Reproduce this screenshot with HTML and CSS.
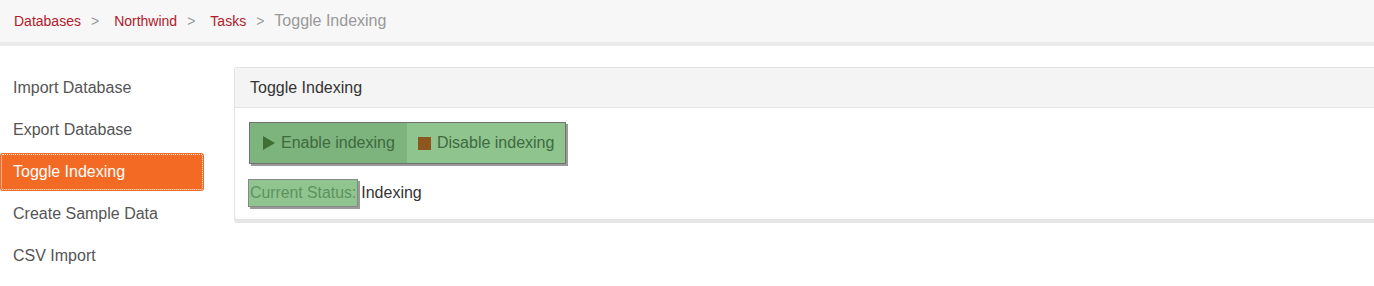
FILE: index.html
```html
<!DOCTYPE html>
<html>
<head>
<meta charset="utf-8">
<link rel="stylesheet" href="styles.css">
</head>
<body>
<nav class="crumbs">
  <a class="crumb first" href="#">Databases</a><span class="sep">&gt;</span>
  <a class="crumb" href="#">Northwind</a><span class="sep">&gt;</span>
  <a class="crumb" href="#">Tasks</a><span class="sep">&gt;</span>
  <span class="current">Toggle Indexing</span>
</nav>
<div class="main">
  <ul class="side">
    <li class="item">Import Database</li>
    <li class="item">Export Database</li>
    <li class="item active">Toggle Indexing</li>
    <li class="item">Create Sample Data</li>
    <li class="item">CSV Import</li>
  </ul>
  <section class="panel">
    <div class="panel-head">Toggle Indexing</div>
    <div class="panel-body">
      <div class="btn-group">
        <button class="btn on"><svg class="ico" width="12" height="14" viewBox="0 0 12 14"><polygon points="0,0 12,7 0,14" fill="#3f6f34"/></svg>Enable indexing</button>
        <button class="btn"><span class="stop"></span>Disable indexing</button>
      </div>
      <div class="status"><span class="label">Current Status:</span><span class="val">Indexing</span></div>
    </div>
  </section>
</div>
</body>
</html>
```
FILE: styles.css
```css
html, body {
  margin: 0;
  padding: 0;
  background: #fff;
  font-family: "Liberation Sans", Arial, sans-serif;
}
.crumbs {
  height: 42px;
  background: #f7f7f7;
  border-bottom: 4px solid #ebebeb;
  display: flex;
  align-items: center;
  padding-left: 14px;
  font-size: 14px;
}
.crumb {
  color: #b3192a;
  text-decoration: none;
  margin-left: 5px;
}
.crumb.first { margin-left: 0; }
.sep {
  color: #999;
  margin: 0 10px;
}
.current {
  color: #999;
  font-size: 16px;
}
.main {
  display: flex;
  gap: 30px;
  padding-top: 21px;
}
.side {
  list-style: none;
  margin: 2px 0 0 0;
  padding: 0;
  width: 204px;
  flex: none;
  display: flex;
  flex-direction: column;
  gap: 4px;
}
.item {
  font-size: 16px;
  line-height: 20px;
  padding: 9px 13px;
  color: #555;
}
.item.active {
  background: #f36a25;
  color: #fff;
  border-radius: 3px;
  outline: 1px dotted #fff;
  outline-offset: -2px;
}
.panel {
  flex: 1;
  border: 1px solid #e3e3e3;
  border-right: none;
  border-radius: 3px 0 0 3px;
  box-shadow: 0 3px 0 #e6e6e6;
  align-self: flex-start;
}
.panel-head {
  background: #f4f4f4;
  border-bottom: 1px solid #e6e6e6;
  padding: 10px 15px 9px;
  font-size: 16px;
  line-height: 20px;
  color: #333;
}
.panel-body {
  padding: 14px 14px 12px;
}
.btn-group {
  display: inline-flex;
  border: 1px solid #707070;
  box-shadow: 2px 2px 0 #9a9a9a;
}
.btn {
  border: none;
  margin: 0;
  font-family: inherit;
  font-size: 16px;
  line-height: 20px;
  padding: 10px 0 10px 11px;
  background: #8fc48f;
  color: #3e6a3e;
  display: flex;
  align-items: center;
  justify-content: flex-start;
  gap: 6px;
  width: 158px;
  white-space: nowrap;
}
.btn.on {
  background: #7db37d;
  width: 157px;
  padding-left: 13px;
}
.stop {
  width: 13px;
  height: 13px;
  background: #8c561c;
  display: inline-block;
}
.status {
  margin-top: 15px;
  display: flex;
  align-items: center;
  margin-left: -1px;
}
.label {
  background: #90c590;
  border: 1px solid #888;
  box-shadow: 2px 2px 0 #9a9a9a;
  color: #5e915e;
  font-size: 15.8px;
  line-height: 26px;
  padding: 0 1px;
}
.val {
  color: #333;
  font-size: 16px;
  margin-left: 3px;
}
```
